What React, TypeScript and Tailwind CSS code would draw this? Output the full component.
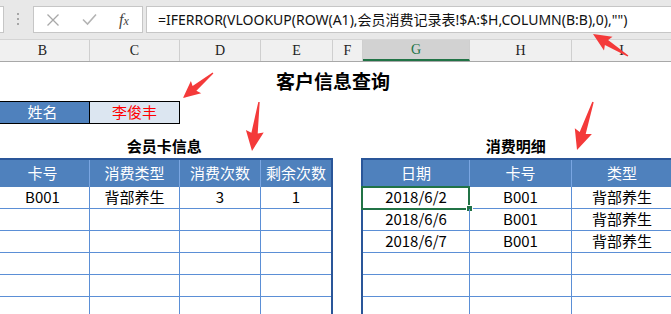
import React from "react";

type Pt = [number, number];

function arrow(tail: Pt, tip: Pt, headLen: number, headHalf: number, shaftHalf: number): string {
  const dx = tip[0] - tail[0];
  const dy = tip[1] - tail[1];
  const L = Math.hypot(dx, dy);
  const ux = dx / L;
  const uy = dy / L;
  const nx = -uy;
  const ny = ux;
  const bx = tip[0] - ux * headLen;
  const by = tip[1] - uy * headLen;
  const t = 0.7;
  const pts: Pt[] = [
    [tail[0] + nx * t, tail[1] + ny * t],
    [bx + nx * shaftHalf, by + ny * shaftHalf],
    [bx - ux * 2 + nx * headHalf, by - uy * 2 + ny * headHalf],
    [tip[0], tip[1]],
    [bx - ux * 2 - nx * headHalf, by - uy * 2 - ny * headHalf],
    [bx - nx * shaftHalf, by - ny * shaftHalf],
    [tail[0] - nx * t, tail[1] - ny * t],
  ];
  return pts.map((p) => `${p[0].toFixed(1)},${p[1].toFixed(1)}`).join(" ");
}

const FONT = { fontFamily: '"Noto Sans", "Noto Sans CJK SC", sans-serif' };
const CJK = { fontFamily: '"Noto Sans CJK SC", "Noto Sans", sans-serif' };

const leftCols = [94, 90, 81, 70];
const rightCols = [107, 102, 100];

function TableHeader({ cols, labels }: { cols: number[]; labels: string[] }) {
  return (
    <div className="flex h-[27px] bg-[#4f81bd]">
      {labels.map((l, i) => (
        <div
          key={i}
          style={{ width: cols[i] }}
          className={
            "flex items-center justify-center text-[15px] text-white " +
            (i < labels.length - 1 ? "border-r border-[#7aa6e2]" : "")
          }
        >
          {l}
        </div>
      ))}
    </div>
  );
}

function TableRow({
  cols,
  cells,
  selectFirst,
}: {
  cols: number[];
  cells: string[];
  selectFirst?: boolean;
}) {
  return (
    <div className="flex h-[22px] border-b border-[#5b8fd6]">
      {cells.map((c, i) => (
        <div
          key={i}
          style={{ width: cols[i] }}
          className={
            "relative flex items-center justify-center text-[15px] text-black " +
            (i < cells.length - 1 ? "border-r border-[#5b8fd6]" : "")
          }
        >
          {c}
          {selectFirst && i === 0 ? (
            <>
              <div className="absolute -left-[2px] -top-[1px] -right-[1px] -bottom-[2px] border-2 border-[#217346]" />
              <div className="absolute -right-[4px] -bottom-[4px] w-[7px] h-[7px] bg-[#217346] border border-white" />
            </>
          ) : null}
        </div>
      ))}
    </div>
  );
}

export default function App() {
  const headerCols: { w: number; l: string; sel?: boolean }[] = [
    { w: 94, l: "B" },
    { w: 90, l: "C" },
    { w: 81, l: "D" },
    { w: 72, l: "E" },
    { w: 30, l: "F" },
    { w: 107, l: "G", sel: true },
    { w: 102, l: "H" },
    { w: 100, l: "I" },
  ];

  const leftRows = [
    ["B001", "背部养生", "3", "1"],
    ["", "", "", ""],
    ["", "", "", ""],
    ["", "", "", ""],
    ["", "", "", ""],
    ["", "", "", ""],
  ];
  const rightRows = [
    ["2018/6/2", "B001", "背部养生"],
    ["2018/6/6", "B001", "背部养生"],
    ["2018/6/7", "B001", "背部养生"],
    ["", "", ""],
    ["", "", ""],
    ["", "", ""],
  ];

  return (
    <div className="relative w-[671px] h-[314px] overflow-hidden bg-white" style={FONT}>
      {/* Formula bar */}
      <div className="flex h-[40px] bg-[#e8e8e8] pt-[6px] border-b border-[#d4d4d4]">
        <div className="w-[4px] h-[27px] bg-white border-r border-y border-[#c6c6c6]" />
        <div className="ml-[13px] mt-[7px] flex flex-col gap-[3px]">
          <div className="w-[2px] h-[2px] bg-[#a6a6a6]" />
          <div className="w-[2px] h-[2px] bg-[#a6a6a6]" />
          <div className="w-[2px] h-[2px] bg-[#a6a6a6]" />
        </div>
        <div className="ml-[14px] w-[110px] h-[27px] bg-white border border-[#c6c6c6] flex items-center">
          <svg width="14" height="14" viewBox="0 0 14 14" className="ml-[12px]">
            <path d="M1.5 1.5 L12.5 12.5 M12.5 1.5 L1.5 12.5" stroke="#a8a8a8" strokeWidth="1.3" fill="none" />
          </svg>
          <svg width="15" height="13" viewBox="0 0 15 13" className="ml-[22px]">
            <path d="M1 6.5 L5.5 11 L14 1.5" stroke="#b4b4b4" strokeWidth="1.6" fill="none" />
          </svg>
          <span
            className="ml-[22px] italic text-[16px] text-[#444] leading-none"
            style={{ fontFamily: '"Liberation Serif", serif' }}
          >
            f<span className="text-[12px]">x</span>
          </span>
        </div>
        <div className="ml-[3px] flex-1 h-[27px] bg-white border-y border-l border-[#c6c6c6] flex items-center pl-[11px]">
          <span className="text-[14px] text-[#111] whitespace-nowrap" style={FONT}>
            =IFERROR(VLOOKUP(ROW(A1),会员消费记录表!$A:$H,COLUMN(B:B),0),"")
          </span>
        </div>
      </div>

      {/* Column headers */}
      <div className="flex h-[22px] bg-[#f0f0f0] border-b border-[#a8a8a8] -ml-[4px]">
        {headerCols.map((c, i) => (
          <div
            key={i}
            style={{ width: c.w, fontFamily: '"Liberation Serif", serif' }}
            className={
              "shrink-0 flex items-center justify-center text-[14px] border-r border-[#cfcfcf] " +
              (c.sel ? "bg-[#d2d2d2] text-[#217346] border-b-2 border-b-[#217346]" : "text-[#222]")
            }
          >
            {c.l}
          </div>
        ))}
      </div>

      {/* Sheet body */}
      <div className="flex flex-col" style={CJK}>
        <div className="h-[39px] flex items-center justify-center pr-[5px]">
          <span className="text-[19px] font-bold text-black">客户信息查询</span>
        </div>

        <div className="flex -ml-[4px] h-[23px]">
          <div className="w-[94px] bg-[#4f81bd] border-y border-r border-black flex items-center justify-center text-[15px] text-white">
            姓名
          </div>
          <div className="w-[90px] bg-[#dce6f1] border-y border-r border-black flex items-center justify-center text-[15px] text-[#ff0000]">
            李俊丰
          </div>
        </div>

        <div className="h-[10px]" />

        <div className="flex -ml-[4px] h-[24px]">
          <div className="w-[337px] flex items-center justify-center text-[15px] font-bold text-black">
            会员卡信息
          </div>
          <div className="ml-[28px] w-[311px] flex items-center justify-center text-[15px] font-bold text-black">
            消费明细
          </div>
        </div>

        <div className="flex -ml-[4px]">
          <div className="w-[337px] shrink-0 border-t-2 border-r-2 border-[#2a5699]">
            <TableHeader cols={leftCols} labels={["卡号", "消费类型", "消费次数", "剩余次数"]} />
            {leftRows.map((r, i) => (
              <TableRow key={i} cols={leftCols} cells={r} />
            ))}
          </div>
          <div className="ml-[28px] w-[311px] shrink-0 border-t-2 border-l-2 border-[#2a5699]">
            <TableHeader cols={rightCols} labels={["日期", "卡号", "类型"]} />
            {rightRows.map((r, i) => (
              <TableRow key={i} cols={rightCols} cells={r} selectFirst={i === 0} />
            ))}
          </div>
        </div>
      </div>

      {/* Annotation arrows */}
      <svg className="absolute inset-0 pointer-events-none" width="671" height="314">
        <polygon points={arrow([213, 73], [183, 98], 15, 8, 3)} fill="#f43a3a" />
        <polygon points={arrow([259, 102], [252, 151], 18, 9, 3.2)} fill="#f43a3a" />
        <polygon points={arrow([593, 102], [577, 150], 18, 9, 3.2)} fill="#f43a3a" />
        <polygon points={arrow([628, 56], [593, 34], 16, 8, 3)} fill="#f43a3a" />
      </svg>
    </div>
  );
}
